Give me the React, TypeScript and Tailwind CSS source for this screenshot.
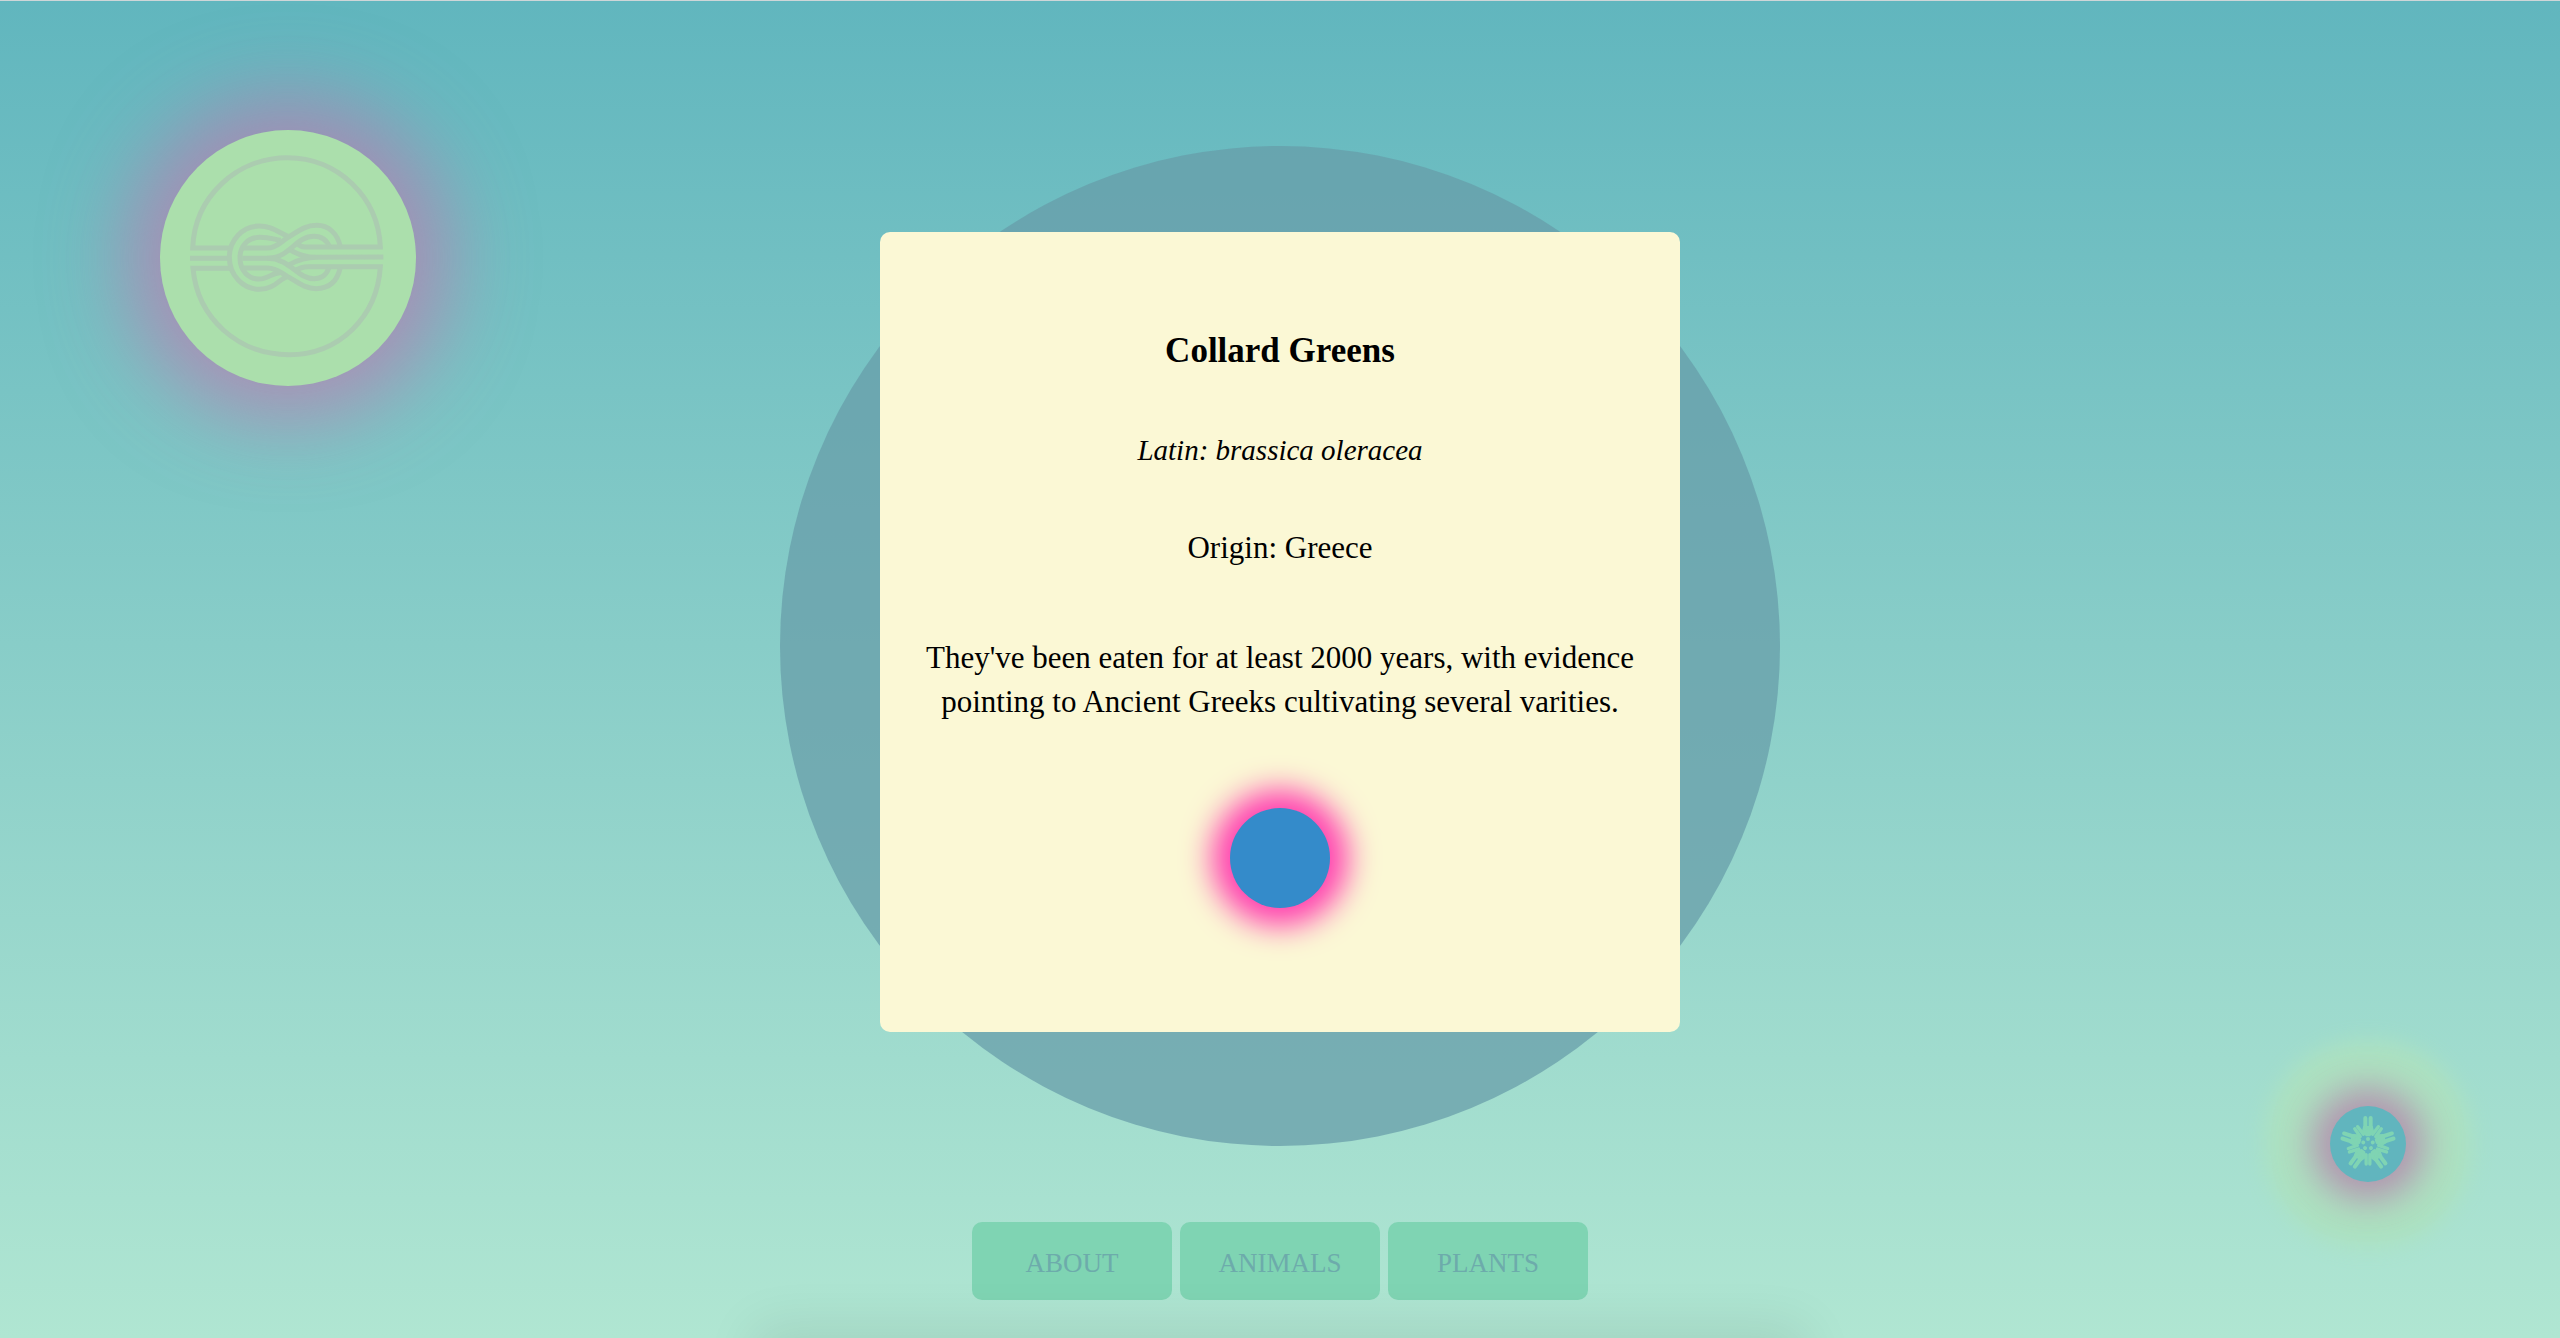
import React from "react";

function KnotLogo() {
  return (
    <svg
      viewBox="300 330 768 768"
      className="h-full w-full fill-none stroke-[#abccb0] stroke-[15]"
      strokeLinejoin="miter"
      aria-hidden="true"
    >
      <path d="M512 684H398C404 530 530 413 683 413C832 413 955 530 961 681H735C724 681 718 678 712 670" />
      <path d="M512 745H399C412 895 535 1004 687 1004C838 1004 952 890 961 740H745C726 740 714 746 704 752" />
      <path d="M390 715H506M970 711L770 712C735 712 710 702 688 688M770 712C735 712 710 722 688 734" />
      <path d="M683 649C650 634 634 618 597 618C548 618 508 660 508 712C508 766 549 808 598 808C644 808 656 778 683 769" />
      <path d="M662 661C642 658 630 652 600 652C562 652 540 680 540 713C540 752 565 777 597 777C626 777 636 758 660 758" />
      <path d="M547 684H622C650 684 664 664 683 653C716 633 735 616 770 616C806 616 832 640 841 680" />
      <path d="M547 744H622C652 744 668 762 683 770C716 788 735 806 768 806C806 806 832 786 841 742" />
      <path d="M547 715H622C690 715 705 649 762 649C786 649 800 660 808 680" />
      <path d="M622 715C690 715 712 776 762 776C786 776 798 766 806 745" />
    </svg>
  );
}

const turns = [0, 72, 144, 216, 288];

function PeopleFlower() {
  return (
    <svg viewBox="-114 -114 228 228" className="h-full w-full" aria-hidden="true">
      {turns.map((turn) => (
        <g key={turn} transform={`rotate(${turn})`} className="fill-[#7fd4b3] stroke-[#7fd4b3]" strokeLinecap="round">
          <circle cx="0" cy="-15" r="6" stroke="none" />
          <path d="M-19 -36L-6 -23H6L19 -36L14 -54H-14Z" stroke="none" />
          <path d="M-8 -78V-46M8 -78V-46" strokeWidth="12" fill="none" />
          <path d="M-14 -29L-31 -52M14 -29L31 -52" strokeWidth="10" fill="none" />
        </g>
      ))}
    </svg>
  );
}

const links = ["ABOUT", "ANIMALS", "PLANTS"];

export default function App() {
  return (
    <div className="h-screen overflow-hidden border-t border-[#cfd6d8] bg-linear-to-b from-[#61b6be] to-[#b0e6d2] font-['Liberation_Serif',serif] text-black">
      <div className="grid grid-cols-[1fr_auto_1fr]">
        <header className="pt-[129px] pl-40">
          <a
            href="#home"
            aria-label="Home"
            className="block size-64 rounded-full bg-[#abdfac] shadow-[0_0_80px_34px_rgba(215,100,170,0.54)]"
          >
            <KnotLogo />
          </a>
        </header>

        <div className="flex flex-col items-center pt-[145px]">
          <main className="flex size-[1000px] flex-col items-center rounded-full bg-[rgba(103,156,168,0.73)] pt-[86px]">
            <article className="flex size-[800px] flex-col items-center rounded-[10px] bg-[#fbf8d5] px-10 pt-[94px] text-center text-[31px] leading-[44px]">
              <h1 className="text-[35px] leading-[50px] font-bold">Collard Greens</h1>
              <p className="mt-[52px] text-[29px] italic">Latin: brassica oleracea</p>
              <p className="mt-[54px]">Origin: Greece</p>
              <p className="mt-[66px]">
                They've been eaten for at least 2000 years, with evidence pointing to Ancient Greeks
                cultivating several varities.
              </p>
              <button
                type="button"
                aria-label="Close"
                className="mt-[84px] size-[100px] rounded-full bg-[#348bca] shadow-[0_0_30px_18px_#ff40b0]"
              />
            </article>
          </main>
          <nav className="mt-[76px] flex gap-2">
            {links.map((label) => (
              <button
                key={label}
                type="button"
                className="h-[78px] w-[200px] rounded-[10px] bg-[#7fd4b3] pt-1 text-[27px] text-[#6dabab]"
              >
                {label}
              </button>
            ))}
          </nav>
        </div>

        <aside className="flex items-end justify-end pr-[154px] pb-[118px]">
          <button
            type="button"
            aria-label="Community"
            className="size-[76px] rounded-full bg-[#61b5be] shadow-[0_0_36px_18px_rgba(180,120,170,0.75),0_0_22px_65px_#ade2c1]"
          >
            <PeopleFlower />
          </button>
        </aside>
      </div>
      <section
        aria-hidden="true"
        className="relative mx-auto mt-[38px] h-[400px] w-[1030px] shadow-[0_0_50px_10px_rgba(0,0,0,0.09)]"
      />
    </div>
  );
}
